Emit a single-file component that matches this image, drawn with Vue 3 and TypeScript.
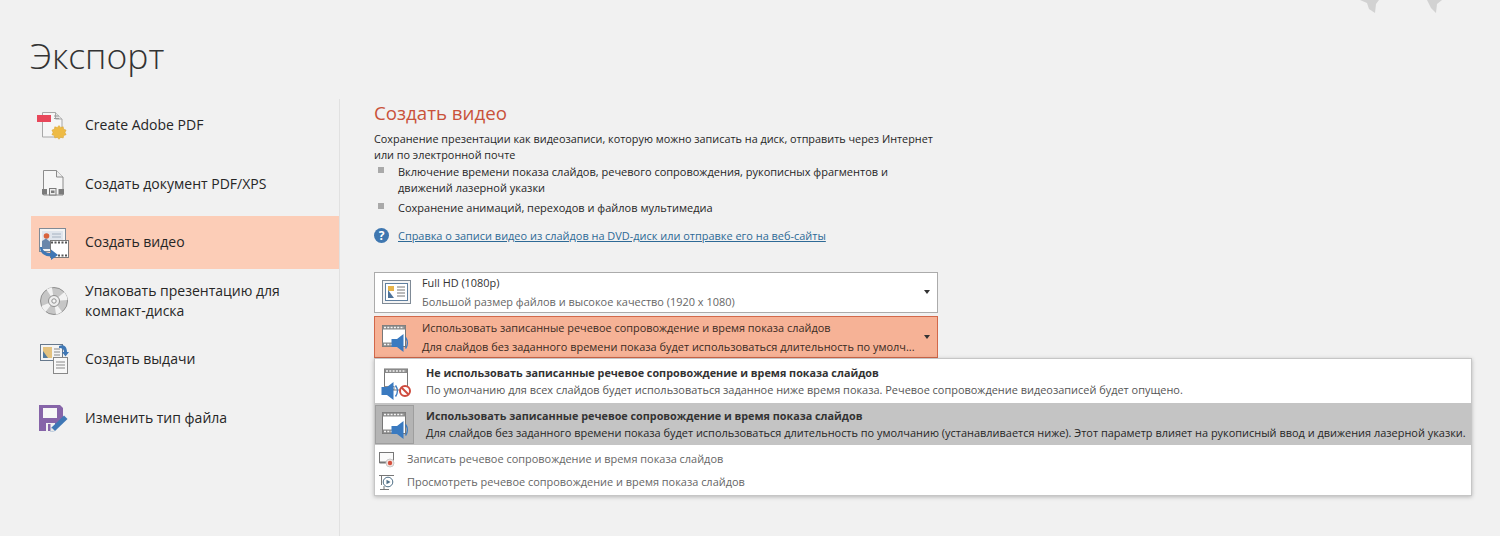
<script setup lang="ts">
interface NavItem { id: string; label: string[]; active?: boolean }
const nav: NavItem[] = [
  { id: 'pdf', label: ['Create Adobe PDF'] },
  { id: 'xps', label: ['Создать документ PDF/XPS'] },
  { id: 'video', label: ['Создать видео'], active: true },
  { id: 'cd', label: ['Упаковать презентацию для', 'компакт-диска'] },
  { id: 'handout', label: ['Создать выдачи'] },
  { id: 'type', label: ['Изменить тип файла'] },
]
</script>

<template>
  <div class="page">
    <div class="corner" aria-hidden="true">
      <svg width="26" height="14" viewBox="0 0 26 14"><path d="M0 0h19l-3 4-1 9-6-4-2-6z" fill="#d2d2d2"/></svg>
      <svg width="20" height="14" viewBox="0 0 20 14"><path d="M0 0h15l-5 4-1 9-5-5z" fill="#d2d2d2"/></svg>
    </div>
    <h1 class="title">Экспорт</h1>
    <div class="body">
      <nav class="nav">
        <div v-for="item in nav" :key="item.id" class="nav-item" :class="{ active: item.active }">
          <svg class="nav-icon" width="32" height="32" viewBox="0 0 32 32">
            <template v-if="item.id === 'pdf'">
              <path d="M4.500 3.500h13l6.500 6.500v18H4.500z" fill="#f6f6f6" stroke="#a8a8a8"/>
              <path d="M17.500 3.500v6.500h6.500" fill="#e4e4e4" stroke="#a8a8a8"/>
              <path d="M16 7h5M16 9.500h5" stroke="#9a9a9a"/>
              <rect x="-1" y="6" width="14" height="7" fill="#e8475a"/>
              <path d="M21 16.500l1.700 2 2.500-.7.500 2.500 2.400.8-1.100 2.300 1.100 2.300-2.400.8-.5 2.500-2.500-.7-1.700 2-1.700-2-2.500.7-.5-2.500-2.400-.8 1.100-2.300-1.100-2.300 2.400-.8.500-2.500 2.500.7z" fill="#eebb45" stroke="#d8a232" stroke-width=".5"/>
            </template>
            <template v-else-if="item.id === 'xps'">
              <path d="M5.500 2.500h13l6.500 6.500v18H5.500z" fill="#f6f6f6" stroke="#8c8c8c"/>
              <path d="M18.500 2.500v6.500h6.500" fill="#eee" stroke="#8c8c8c"/>
              <rect x="4" y="21" width="5" height="5.500" fill="#7b7b7b"/>
              <rect x="20.500" y="21" width="5.500" height="5.500" fill="#7b7b7b"/>
              <rect x="11.500" y="20.500" width="6.500" height="6.500" fill="#eee" stroke="#7b7b7b"/>
              <rect x="13" y="22.500" width="3.500" height="2.500" fill="#7b7b7b"/>
            </template>
            <template v-else-if="item.id === 'video'">
              <rect x="1.500" y="2.500" width="26" height="23" fill="#f4f4f4" stroke="#7f8a96"/>
              <rect x="4" y="5" width="21" height="18" fill="#e0e5ec"/>
              <circle cx="8.500" cy="10" r="2.800" fill="#d9633c"/>
              <path d="M4 23v-8l4-2.500 5 4v6.500z" fill="#6a87ab"/>
              <path d="M14 8h9M14 11h9" stroke="#a6b2c0"/>
              <rect x="12.500" y="14.500" width="18" height="17" fill="#fff" stroke="#7b7b7b"/>
              <path d="M13 16.500h17M20 29.500h10" stroke="#555" stroke-width="2" stroke-dasharray="2 1.500"/>
              <path d="M4 21c1 4 4 6 9 6v-3.500l7 5.500-7 5v-3.500c-6 0-11-3-11-9.500z" fill="#3f77b5"/>
            </template>
            <template v-else-if="item.id === 'cd'">
              <circle cx="16" cy="16" r="13.500" fill="#c6c6c6" stroke="#8f8f8f"/>
              <path d="M16 16L8.500 4.500A13.500 13.500 0 0 1 14 2.600zM16 16l13.400-1a13.500 13.500 0 0 0-3-8zM16 16L3.500 21a13.500 13.500 0 0 0 4 6zM16 16l8 10.800a13.500 13.500 0 0 1-6 2.600z" fill="#f2f2f2"/>
              <circle cx="16" cy="16" r="5.500" fill="#eee" stroke="#8f8f8f"/>
              <circle cx="16" cy="16" r="2.200" fill="#f6f6f6" stroke="#8f8f8f"/>
            </template>
            <template v-else-if="item.id === 'handout'">
              <rect x="2.500" y="1.500" width="22" height="16" fill="#f4f4f4" stroke="#66788c"/>
              <rect x="5" y="4" width="9" height="11" fill="#e4c27f"/>
              <path d="M5 15V8l5 7z" fill="#527a9e"/>
              <path d="M16 6h6M16 9h6M16 12h6" stroke="#888"/>
              <rect x="15.500" y="14.500" width="14" height="16" fill="#f8f8f8" stroke="#888"/>
              <path d="M18 19h9M18 22h9M18 25h9" stroke="#888"/>
              <path d="M21 3c5-2 8 1 8 6h2l-3.500 4.500L24 9h2c0-3-2-4-5-4z" fill="#3f77b5"/>
            </template>
            <template v-else>
              <path d="M1 3h21l3 3v11L12 29H1z" fill="#8664a8"/>
              <rect x="5" y="6" width="14" height="10" fill="#f6f6f6"/>
              <rect x="8" y="21" width="9" height="8" fill="#f1f1f1"/>
              <rect x="10" y="22" width="2.500" height="7" fill="#8664a8"/>
              <path d="M12 30l1.500-4.500L26 13.500l3.500 3.500L17 29z" fill="#3f77b5"/>
              <path d="M12 30l1.500-4.500 3.500 3.500z" fill="#e8e8e8"/>
            </template>
          </svg>
          <div class="nav-label"><div v-for="line in item.label" :key="line">{{ line }}</div></div>
        </div>
      </nav>

      <main class="content">
        <h2 class="heading">Создать видео</h2>
        <p class="intro">Сохранение презентации как видеозаписи, которую можно записать на диск, отправить через Интернет<br>или по электронной почте</p>
        <ul class="bullets">
          <li>Включение времени показа слайдов, речевого сопровождения, рукописных фрагментов и<br>движений лазерной указки</li>
          <li>Сохранение анимаций, переходов и файлов мультимедиа</li>
        </ul>
        <div class="help">
          <span class="help-icon">?</span>
          <a class="help-link">Справка о записи видео из слайдов на DVD-диск или отправке его на веб-сайты</a>
        </div>

        <div class="combo first">
          <svg class="combo-icon" width="32" height="28" viewBox="0 0 32 28">
            <rect x="1.500" y="2.500" width="28" height="23" fill="#f4f4f4" stroke="#7f8a96"/>
            <rect x="4.500" y="5.500" width="22" height="17" fill="#fff" stroke="#5f7f9f"/>
            <path d="M7 8h6v5H7z" fill="#e6b44a"/>
            <path d="M7 20v-8l6 8z" fill="#4d7299"/>
            <path d="M16 9h8M16 12h8M16 15h8M16 18h8" stroke="#777"/>
          </svg>
          <div class="combo-text">
            <div class="combo-main">Full HD (1080p)</div>
            <div class="combo-sub">Большой размер файлов и высокое качество (1920 x 1080)</div>
          </div>
          <span class="caret"></span>
        </div>

        <div class="combo open">
          <svg class="combo-icon" width="32" height="30" viewBox="0 0 32 30">
            <use href="#film" /><use href="#speaker" />
          </svg>
          <div class="combo-text">
            <div class="combo-main dark">Использовать записанные речевое сопровождение и время показа слайдов</div>
            <div class="combo-sub dark">Для слайдов без заданного времени показа будет использоваться длительность по умолч...</div>
          </div>
          <span class="caret"></span>
        </div>

        <div class="menu">
          <div class="menu-row plain">
            <svg class="menu-icon" width="36" height="38" viewBox="0 0 36 38">
              <use href="#film" x="3" y="3.500" /><use href="#speaker" x="-9" y="8" />
              <circle cx="25" cy="29" r="5" fill="#fff" stroke="#cf4b3e" stroke-width="2"/>
              <path d="M21.500 25.500l7 7" stroke="#cf4b3e" stroke-width="2"/>
            </svg>
            <div>
              <div class="menu-main">Не использовать записанные речевое сопровождение и время показа слайдов</div>
              <div class="menu-sub">По умолчанию для всех слайдов будет использоваться заданное ниже время показа. Речевое сопровождение видеозаписей будет опущено.</div>
            </div>
          </div>
          <div class="menu-row selected">
            <span class="menu-icon-box"><svg width="28" height="30" viewBox="0 0 28 30"><use href="#film" /><use href="#speaker" /></svg></span>
            <div>
              <div class="menu-main">Использовать записанные речевое сопровождение и время показа слайдов</div>
              <div class="menu-sub strong">Для слайдов без заданного времени показа будет использоваться длительность по умолчанию (устанавливается ниже). Этот параметр влияет на рукописный ввод и движения лазерной указки.</div>
            </div>
          </div>
          <div class="menu-small first">
            <svg width="20" height="18" viewBox="0 0 20 18"><rect x="1.500" y="2.500" width="14" height="10" fill="#fafafa" stroke="#777"/><path d="M1.500 12.500h14" stroke="#777" stroke-width="2"/><circle cx="12" cy="13" r="4" fill="#f4e4e0" stroke="#c9c9c9"/><circle cx="12" cy="13" r="2.200" fill="#d4503e"/></svg>
            <span>Записать речевое сопровождение и время показа слайдов</span>
          </div>
          <div class="menu-small">
            <svg width="20" height="18" viewBox="0 0 20 18"><path d="M1 2.500h15M3.500 2.500V12M2 16.500h9M6 13v3.500" stroke="#777" fill="none"/><circle cx="10" cy="9" r="4.800" fill="#fff" stroke="#4f6f86"/><path d="M8.500 6.800l4 2.200-4 2.200z" fill="#4f6f86"/></svg>
            <span>Просмотреть речевое сопровождение и время показа слайдов</span>
          </div>
        </div>
      </main>
    </div>
    <svg width="0" height="0" class="defs" aria-hidden="true">
      <defs>
        <g id="film">
          <rect x="1.500" y="3.500" width="23" height="21" fill="#fff" stroke="#777"/>
          <rect x="1.500" y="3.500" width="23" height="4" fill="#8a8a8a"/>
          <path d="M3 5.500h20" stroke="#f4f4f4" stroke-width="1.500" stroke-dasharray="2 1.300"/>
          <rect x="1.500" y="20.500" width="10" height="4" fill="#8a8a8a"/>
          <path d="M3 22.500h8" stroke="#f4f4f4" stroke-width="1.500" stroke-dasharray="2 1.300"/>
        </g>
        <g id="speaker">
          <path d="M10.500 17h5.500l6.500-5v18l-6.500-5h-5.500z" fill="#3a7ac0"/>
          <path d="M24.500 15.500c2.400 3.200 2.400 7.800 0 11" fill="none" stroke="#3a7ac0" stroke-width="1.500"/>
        </g>
      </defs>
    </svg>
  </div>
</template>

<style>
html, body { margin: 0; background: #f1f1f1; }
</style>

<style scoped>
.page {
  position: relative;
  width: 1500px;
  height: 536px;
  overflow: hidden;
  background: #f1f1f1;
  color: #262626;
  font-family: "Open Sans", "Noto Sans", sans-serif;
}
.defs { position: absolute; }
.corner {
  position: absolute;
  top: 0;
  left: 1360px;
  display: flex;
  gap: 41px;
}
.title {
  margin: 0;
  padding: 33px 0 0 30px;
  box-sizing: border-box;
  height: 98.500px;
  font-size: 35.500px;
  line-height: 44px;
  font-weight: 300;
  color: #333;
}
.body { display: flex; align-items: stretch; height: 437.500px; }
.nav {
  width: 308px;
  margin-left: 31px;
  border-right: 1px solid #e1e1e1;
  display: flex;
  flex-direction: column;
  gap: 5.500px;
}
.nav-item {
  height: 53px;
  flex: none;
  display: flex;
  align-items: center;
  gap: 15px;
  padding-left: 7px;
  font-size: 14px;
  line-height: 20px;
}
.nav-item.active { background: #fccdb7; }
.nav-icon { flex: none; overflow: visible; }
.content { position: relative; padding: 0.500px 0 0 34px; width: 564px; }
.heading {
  margin: 0;
  font-size: 18.700px;
  line-height: 28px;
  font-weight: 400;
  color: #c9523a;
}
.intro { margin: 3.500px 0 0; font-size: 10.850px; line-height: 16px; white-space: nowrap; }
.bullets { list-style: none; margin: 1px 0 0; padding: 0 0 0 24px; font-size: 11px; line-height: 16px; white-space: nowrap; }
.bullets li { position: relative; margin-bottom: 4px; }
.bullets li::before {
  content: "";
  position: absolute;
  left: -20px;
  top: 3px;
  width: 6px;
  height: 6px;
  background: #a9a9a9;
}
.help { display: flex; align-items: center; gap: 9px; margin-top: 10px; height: 20px; }
.help-icon {
  width: 15px;
  height: 15px;
  border-radius: 50%;
  background: #3f77b0;
  color: #fff;
  font-size: 12px;
  font-weight: 700;
  line-height: 15px;
  text-align: center;
}
.help-link { font-size: 10.950px; color: #2e6a96; text-decoration: underline; white-space: nowrap; }
.combo {
  width: 564px;
  height: 42px;
  box-sizing: border-box;
  display: flex;
  align-items: center;
  background: #fff;
  border: 1px solid #ababab;
  padding: 0 6px;
  margin-top: 3px;
}
.combo.first { margin-top: 26px; height: 41px; }
.combo.open { background: #f6b296; border-color: #d2684a; }
.combo-icon { flex: none; width: 32px; overflow: visible; }
.combo-text { flex: 1; margin-left: 9px; min-width: 0; }
.combo.open .combo-text { padding-top: 1px; }
.combo-main { font-size: 10.900px; line-height: 19px; white-space: nowrap; color: #333; }
.combo-sub { font-size: 10.950px; line-height: 19px; white-space: nowrap; color: #666; }
.combo-main.dark, .combo-sub.dark { color: #3a2a22; }
.caret {
  flex: none;
  width: 0;
  height: 0;
  border-left: 3.500px solid transparent;
  border-right: 3.500px solid transparent;
  border-top: 4px solid #333;
  margin: 0 1px 0 6px;
}
.menu {
  position: absolute;
  left: 34px;
  top: 259.500px;
  width: 1098px;
  height: 138px;
  box-sizing: border-box;
  background: #fff;
  border: 1px solid #c6c6c6;
  box-shadow: 0 1px 4px rgba(0, 0, 0, 0.25);
  padding: 2px 0;
}
.menu-row {
  height: 42px;
  display: flex;
  align-items: center;
  white-space: nowrap;
}
.menu-row.plain { padding-left: 5px; gap: 10px; padding-bottom: 2px; box-sizing: border-box; }
.menu-row.selected { background: #c4c4c4; gap: 12px; }
.menu-icon { flex: none; width: 36px; overflow: visible; }
.menu-icon-box {
  flex: none;
  width: 39px;
  height: 39px;
  border: 1px solid #9e9e9e;
  background: #b4b4b4;
  box-sizing: border-box;
  display: flex;
  align-items: center;
  justify-content: center;
}
.menu-icon-box svg { overflow: visible; }
.menu-main { font-size: 10.800px; line-height: 17px; font-weight: 700; color: #333; }
.menu-sub { font-size: 10.950px; line-height: 17px; color: #555; }
.menu-sub.strong { color: #262626; }
.menu-small {
  height: 23px;
  display: flex;
  align-items: center;
  gap: 9px;
  padding-left: 3px;
  font-size: 10.950px;
  color: #666;
}
.menu-small svg { flex: none; overflow: visible; }
.menu-small.first { margin-top: 2px; }
</style>
